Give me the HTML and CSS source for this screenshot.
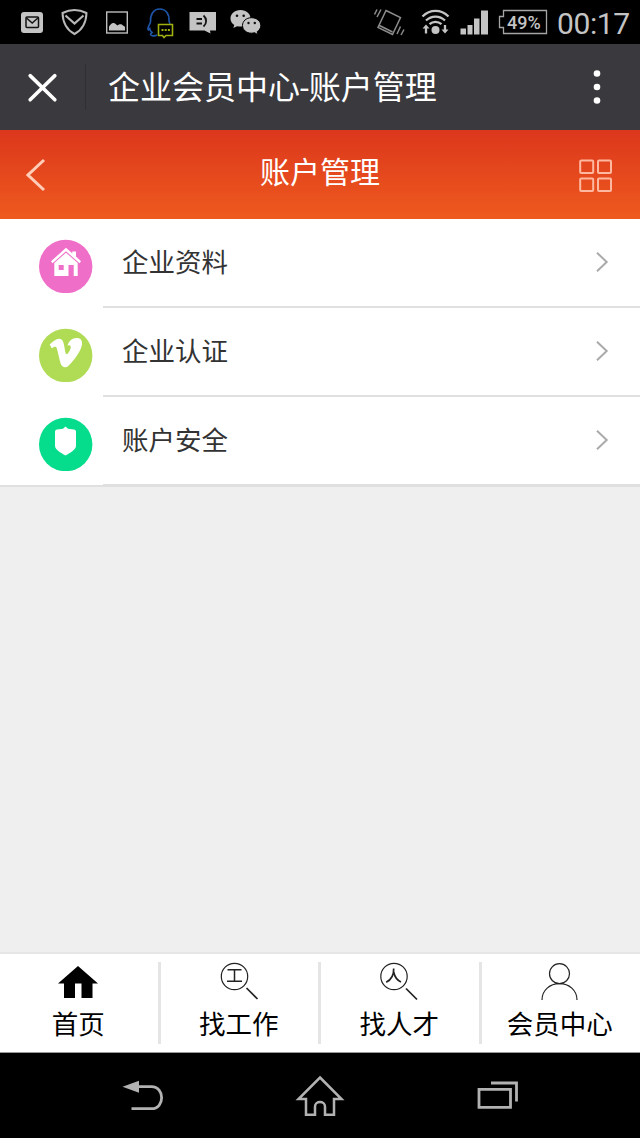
FILE: index.html
```html
<!DOCTYPE html>
<html lang="zh-CN">
<head>
    <meta charset="UTF-8">
    <title>企业会员中心-账户管理</title>
    <link rel="stylesheet" href="styles.css">
</head>
<body>
    <!-- Status bar -->
    <div class="status-bar">
        <div class="notices">
            <svg width="34" height="44" viewBox="15 0 34 44">
                <rect x="21" y="12" width="22" height="21" rx="3" fill="#c4c4c4"/>
                <rect x="26" y="17" width="12.500" height="10.500" rx="1" fill="none" stroke="#111" stroke-width="1.500"/>
                <path d="M26.500 18l5.700 5 5.700-5" fill="none" stroke="#111" stroke-width="1.400"/>
            </svg>
            <svg width="34" height="44" viewBox="58 0 34 44">
                <path d="M74.500 10c4 0 8 1 12 3-.300 9-3.500 16.500-12 21-8.500-4.500-11.700-12-12-21 4-2 8-3 12-3z" fill="none" stroke="#b8b8b8" stroke-width="2"/>
                <path d="M65.500 15.500l9 8 9-8" fill="none" stroke="#b8b8b8" stroke-width="2.200"/>
            </svg>
            <svg width="34" height="44" viewBox="101 0 34 44">
                <rect x="106.700" y="12" width="20.600" height="21" fill="none" stroke="#bdbdbd" stroke-width="1.400"/>
                <path d="M109 30.500v-4c1-1.500 2-3 4-3.500 2-.400 3 1.500 4.500 2.500 1.500-1.500 4-2 5.500 0 1 .800 2 .800 2 2v3z" fill="#c4c4c4"/>
            </svg>
            <svg width="34" height="44" viewBox="144 0 34 44">
                <path d="M157 35c-2.500 1.500-6 1-6.500-.500 0-1 .800-1.500 1.500-2-1.300-1-2-2.300-2.300-3.800-1.200 1.800-2 1.800-1.700-.700.500-2.500 2-4 2.500-6-.500-7.500 3-13 9.300-13s9.700 5.500 9.200 12l1 3" fill="none" stroke="#1f55a8" stroke-width="1.600"/>
                <path d="M158.500 24.500h14v11h-6.500l-2 2-1.500-2h-4z" fill="#000" stroke="#a0b010" stroke-width="1.600"/>
                <path d="M161.500 30h2m1.200 0h2m1.200 0h2" stroke="#a0b010" stroke-width="2"/>
            </svg>
            <svg width="34" height="44" viewBox="187 0 34 44">
                <path d="M189.500 12h26.500v18.500h-6l.500 3-6-3h-15z" fill="#c4c4c4"/>
                <path d="M196.500 19h5.500m-5.500 4.500h5.500" stroke="#111" stroke-width="2"/>
                <path d="M203.500 15.500c3.500 3 3.500 8 0 11" fill="none" stroke="#111" stroke-width="1.800"/>
            </svg>
            <svg width="34" height="44" viewBox="230 0 34 44">
                <path d="M240.500 10c-5.800 0-10 3.800-10 8.500 0 3 1.400 5 3.800 6.500l-1 3 3.800-1.800c1.400.300 2.400.300 3.900.300 5.500-.200 9.500-3.700 9.500-8.200s-4.200-8.300-10-8.300z" fill="#c4c4c4"/>
                <path d="M251.500 17.700c-5.400 0-9 3.600-9 7.800s3.800 7.700 8.800 7.700c1.100 0 2.200-.200 3.200-.500l3.500 2-.800-3c2.200-1.500 3.600-3.600 3.600-6.200 0-4.200-4-7.800-9.300-7.800z" fill="#c4c4c4" stroke="#000"/>
                <g fill="#111">
                    <circle cx="237" cy="15.700" r="1.300"/>
                    <circle cx="243.700" cy="15.700" r="1.300"/>
                    <circle cx="248.500" cy="23" r="1.200"/>
                    <circle cx="254.800" cy="23" r="1.200"/>
                </g>
            </svg>
        </div>
        <div class="system">
            <svg class="vibrate" width="34" height="44" viewBox="372 0 34 44">
                <g fill="none" stroke="#8c8c8c" stroke-width="1.500">
                    <path d="M386 10.500l14.500 7-8 17-14.500-7zM378.500 25l14 7"/>
                    <path d="M374.500 14.500l2.500-5M377 17l4-7.500M397 34l3.500-7.500M401 35l3-5.500"/>
                </g>
            </svg>
            <svg class="wifi" width="32" height="44" viewBox="420 0 32 44">
                <g fill="none" stroke="#c4c4c4" stroke-width="2.300">
                    <path d="M422.500 16.500c7.500-7.500 18.500-7.500 26 0M426 20.500c5.500-5.300 13.500-5.300 19 0M429.500 24.200c3.500-3.200 8.500-3.200 12 0"/>
                    <path d="M426 33.500v-7M445 25v7"/>
                </g>
                <circle cx="435.500" cy="30" r="4" fill="#c4c4c4"/>
                <path d="M422.500 28.500l3.500-4 3.500 4zM441.500 29.500l3.500 4 3.500-4z" fill="#c4c4c4"/>
            </svg>
            <svg width="30" height="44" viewBox="459 0 30 44">
                <path d="M460.500 28.500h5.500v6h-5.500zM467.500 25h5v9.500h-5zM474 18.500h5.500v16h-5.500zM481 10.500h7v24h-7z" fill="#c4c4c4"/>
            </svg>
            <div class="battery">
                <svg width="50" height="44" viewBox="498 0 50 44">
                    <path d="M503.500 10.500h43v23h-43v-6h-4v-11h4z" fill="none" stroke="#a5a5a5" stroke-width="1.300"/>
                </svg>
                <span class="battery-level">49%</span>
            </div>
            <span class="clock">00:17</span>
        </div>
    </div>

    <!-- Browser title -->
    <div class="browser-bar">
        <svg class="close" width="86" height="86" viewBox="0 44 86 86">
            <path d="M30.500 75.500l25 24.500M55.500 75.500l-25 24.500" stroke="#fff" stroke-width="3.600" stroke-linecap="round"/>
        </svg>
        <span class="browser-title">企业会员中心-账户管理</span>
        <svg class="more" width="8" height="36" viewBox="0 0 8 36">
            <circle cx="4" cy="4.500" r="3.300" fill="#fff"/>
            <circle cx="4" cy="18" r="3.300" fill="#fff"/>
            <circle cx="4" cy="31.500" r="3.300" fill="#fff"/>
        </svg>
    </div>

    <header class="page-header">
        <svg width="36" height="36" viewBox="26 156 36 36">
            <path d="M44 159l-16 15 16 15" fill="none" stroke="#ffcdb8" stroke-width="3"/>
        </svg>
        <h1>账户管理</h1>
        <svg width="36" height="36" viewBox="578 157.500 36 36">
            <g fill="none" stroke="#ffb8a0" stroke-width="2">
                <rect x="580.200" y="161" width="13" height="12.500" rx="1"/>
                <rect x="598" y="161" width="13" height="12.500" rx="1"/>
                <rect x="580.200" y="179" width="13" height="12.500" rx="1"/>
                <rect x="598" y="179" width="13" height="12.500" rx="1"/>
            </g>
        </svg>
    </header>

    <ul class="menu">
        <li>
            <svg class="menu-icon" width="54" height="54" viewBox="39 239 54 54">
                <circle cx="65.700" cy="266.500" r="26.700" fill="#ef6ec8"/>
                <path d="M66 247.800l6.200 5.500v-1.700h3.800v5l5 4.700-1.500 2-13.500-12-13.500 12-1.500-2z" fill="#fff"/>
                <path d="M54.300 263l11.700-10.300 11.700 10.300v13h-4v-11h-5.200v11h-14.200zM58.700 265v5h5v-5z" fill="#fff" fill-rule="evenodd"/>
            </svg>
            <div class="menu-row">
                <span>企业资料</span>
                <svg class="arrow" width="14" height="22" viewBox="0 0 14 22"><path d="M2 1.700l9.700 9.300-9.700 9.300"/></svg>
            </div>
        </li>
        <li>
            <svg class="menu-icon" width="54" height="54" viewBox="39 328 54 54">
                <circle cx="65.700" cy="355.500" r="26.700" fill="#afdb55"/>
                <path d="M49.700 344.500c3-2.500 6-5.700 9.500-5.700 3.700.200 4.500 4 5.200 8 .700 4 1.100 7.500 2.300 7.500s3.800-4.500 4-6.800c.200-2-1-2.700-3.200-1.700 1.200-5 4.700-7.800 9.200-7.800 4.200 0 5.800 2.700 5.300 6.500-.800 6.500-8.500 16.500-13.500 21.200-3 2.700-6.500 1.500-7.700-1.700-1.600-4.500-2.500-11.200-4.100-16-.8-2-2.500-1.700-5 .2z" fill="#fff"/>
            </svg>
            <div class="menu-row">
                <span>企业认证</span>
                <svg class="arrow" width="14" height="22" viewBox="0 0 14 22"><path d="M2 1.700l9.700 9.300-9.700 9.300"/></svg>
            </div>
        </li>
        <li>
            <svg class="menu-icon" width="54" height="54" viewBox="39 417 54 54">
                <circle cx="65.700" cy="444.500" r="26.700" fill="#05dc8c"/>
                <path d="M65.500 426.500l2.500 2.300 6 .7c1.200.2 2 1 2 2.300v14c0 4-5.500 7-10.500 9.700-5-2.700-10.500-5.700-10.500-9.700v-14c0-1.300.8-2.100 2-2.300l6-.7z" fill="#fff"/>
            </svg>
            <div class="menu-row">
                <span>账户安全</span>
                <svg class="arrow" width="14" height="22" viewBox="0 0 14 22"><path d="M2 1.700l9.700 9.300-9.700 9.300"/></svg>
            </div>
        </li>
    </ul>

    <!-- Bottom tabs -->
    <nav class="tab-bar">
        <a class="tab">
            <svg width="42" height="40" viewBox="57 962 42 40">
                <path d="M78 966l20 17.500h-5.500v14.500h-11v-14.500h-6.500v14.500h-11v-14.500h-6z"/>
            </svg>
            <span>首页</span>
        </a>
        <a class="tab">
            <svg width="42" height="40" viewBox="217.500 962 42 40">
                <g fill="none" stroke="#222" stroke-width="1.200">
                    <circle cx="234" cy="976.500" r="13.200"/>
                    <path d="M246 988l11 11" stroke-width="1.700"/>
                    <path d="M227 969.700h14M234 969.700v11.600M226.500 981.300h15" stroke-width="1.500"/>
                </g>
            </svg>
            <span>找工作</span>
        </a>
        <a class="tab">
            <svg width="42" height="40" viewBox="378 962 42 40">
                <g fill="none" stroke="#222" stroke-width="1.200">
                    <circle cx="394" cy="976.500" r="13.200"/>
                    <path d="M406 988.500l11 11" stroke-width="1.700"/>
                    <path d="M393.700 968.500c.200 6-2 11-7.500 13.800M393.700 972c1 5 3 8 7.300 10" stroke-width="1.700"/>
                </g>
            </svg>
            <span>找人才</span>
        </a>
        <a class="tab">
            <svg width="42" height="40" viewBox="538.500 962 42 40">
                <g fill="none" stroke="#222" stroke-width="1.200">
                    <circle cx="559" cy="973.700" r="10"/>
                    <path d="M541.500 1000c0-10 8-16.300 17.500-16.300s17.500 6.300 17.500 16.300"/>
                </g>
            </svg>
            <span>会员中心</span>
        </a>
    </nav>

    <!-- Android navigation keys -->
    <div class="key-bar">
        <svg width="50" height="50" viewBox="118 1072 50 50">
            <path d="M138 1086.700h13.500c13.500 0 13.500 22 0 22h-20" fill="none" stroke="#b2b2b2" stroke-width="2.800"/>
            <path d="M122.500 1086.700l16.500-6v12z" fill="#b2b2b2"/>
        </svg>
        <svg width="50" height="50" viewBox="295 1072 50 50">
            <path d="M320 1077.500l21.500 21.500h-7.500v15.800h-9v-8.300c0-6-10-6-10 0v8.300h-9v-15.800h-7.500z" fill="none" stroke="#b2b2b2" stroke-width="2.500"/>
        </svg>
        <svg width="50" height="50" viewBox="472 1072 50 50">
            <path d="M479 1089.300h31.500v18h-31.500zM491 1083h25.500v18.500" fill="none" stroke="#b2b2b2" stroke-width="2.800"/>
        </svg>
    </div>
</body>
</html>
```
FILE: styles.css
```css
* {
    box-sizing: border-box;
}
body {
    display: flex;
    flex-direction: column;
    height: 1138px;
    margin: 0;
    background-color: #efefef;
    font-family: Roboto, "Noto Sans CJK SC", sans-serif;
    overflow: hidden;
}
svg {
    display: block;
    flex: none;
}
.status-bar {
    display: flex;
    justify-content: space-between;
    height: 44px;
    padding: 0 10px 0 15px;
    background-color: #000;
    color: #c4c4c4;
}
.notices {
    display: flex;
    gap: 9px;
}
.system {
    display: flex;
    gap: 9px;
}
.vibrate {
    margin-right: 5px;
}
.wifi {
    margin-right: -2px;
}
.battery {
    position: relative;
}
.battery-level {
    position: absolute;
    top: 0;
    left: 9px;
    font-size: 18px;
    font-weight: 500;
    line-height: 45px;
}
.clock {
    width: 73px;
    font-size: 30px;
    font-weight: 400;
    line-height: 47px;
    letter-spacing: -0.4px;
    white-space: nowrap;
}
.browser-bar {
    display: flex;
    align-items: center;
    height: 86px;
    padding-right: 39px;
    background-color: #39393e;
    color: #fff;
}
.close {
    border-right: 1px solid #303034;
    clip-path: inset(20px 0);
}
.browser-title {
    flex: 1;
    padding-top: 3px;
    margin-left: 22px;
    font-size: 32px;
    line-height: 83px;
}
.page-header {
    display: flex;
    justify-content: space-between;
    align-items: center;
    height: 89px;
    padding: 0 26px;
    background: linear-gradient(#dc371c, #ee5a1e);
    color: #fff;
}
.page-header h1 {
    margin: 0 0 3px;
    font-size: 30px;
    font-weight: 400;
    line-height: 84px;
}
.menu {
    margin: 0;
    padding: 0;
    border-bottom: 2px solid #e0e0e0;
    background-color: #fff;
    list-style: none;
}
.menu li {
    display: flex;
    height: 89px;
    padding-left: 39px;
}
.menu li:last-child {
    height: 88px;
}
.menu-icon {
    margin-top: 20px;
}
.menu-row {
    display: flex;
    flex: 1;
    justify-content: space-between;
    margin-left: 10px;
    padding: 0 31px 0 19px;
    border-bottom: 2px solid #e0e0e0;
    color: #333;
    font-size: 26.5px;
    line-height: 87px;
}
.menu li:last-child .menu-row {
    border-bottom-width: 1px;
}
.arrow {
    margin-top: 31.5px;
    fill: none;
    stroke: #aaa;
    stroke-width: 2;
}
.tab-bar {
    display: flex;
    height: 101px;
    margin-top: auto;
    padding: 8px 0;
    border-top: 2px solid #e6e6e6;
    border-bottom: 1px solid #999;
    background-color: #fff;
    color: #000;
}
.tab {
    display: flex;
    flex: 1;
    flex-direction: column;
    align-items: center;
    margin-left: -1px;
    border-right: 3px solid #e5e5e5;
    font-size: 26.5px;
    line-height: 46px;
}
.tab:last-child {
    margin-right: 1px;
    border-right: none;
}
.key-bar {
    display: flex;
    justify-content: space-between;
    height: 85px;
    padding: 19px 118px 0;
    background-color: #000;
}
```
